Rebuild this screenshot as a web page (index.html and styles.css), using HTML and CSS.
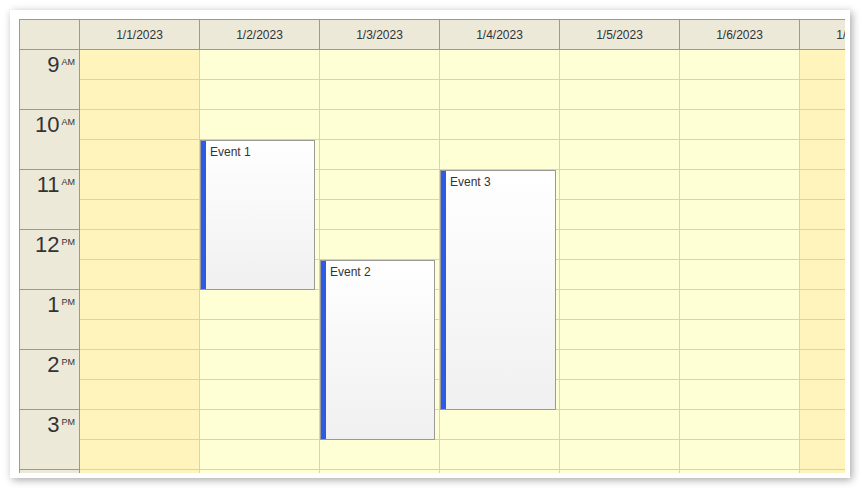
FILE: index.html
```html
<!DOCTYPE html>
<html>
<head>
    <title>Calendar</title>
    <link rel="stylesheet" href="styles.css">
</head>
<body>
    <div class="frame">
        <div class="calendar">
            <div class="grid">
                <!-- header -->
                <div class="corner"></div>
                <div class="col-header">1/1/2023</div>
                <div class="col-header">1/2/2023</div>
                <div class="col-header">1/3/2023</div>
                <div class="col-header">1/4/2023</div>
                <div class="col-header">1/5/2023</div>
                <div class="col-header">1/6/2023</div>
                <div class="col-header">1/7/2023</div>

                <!-- hour headers -->
                <div class="hours">
                    <div class="hour"><span class="num">9</span><span class="ampm">AM</span></div>
                    <div class="hour"><span class="num">10</span><span class="ampm">AM</span></div>
                    <div class="hour"><span class="num">11</span><span class="ampm">AM</span></div>
                    <div class="hour"><span class="num">12</span><span class="ampm">PM</span></div>
                    <div class="hour"><span class="num">1</span><span class="ampm">PM</span></div>
                    <div class="hour"><span class="num">2</span><span class="ampm">PM</span></div>
                    <div class="hour"><span class="num">3</span><span class="ampm">PM</span></div>
                    <!-- 4 PM row, only its top edge shows -->
                    <div class="hour"></div>
                </div>

                <!-- day columns, filled by script -->
                <div class="day weekend"></div>
                <div class="day" id="day2"></div>
                <div class="day" id="day3"></div>
                <div class="day" id="day4"></div>
                <div class="day"></div>
                <div class="day"></div>
                <div class="day weekend"></div>
            </div>
        </div>
    </div>

    <script>
        // half-hour cells for every day column
        document.querySelectorAll('.day').forEach(function(day) {
            for (let i = 0; i < 16; i++) {
                const cell = document.createElement('div');
                cell.className = 'cell';
                day.appendChild(cell);
            }
        });

        // events: start/end in minutes from 9:00
        const events = [
            { day: 'day2', text: 'Event 1', start: 90, end: 240, width: 115 },
            { day: 'day3', text: 'Event 2', start: 210, end: 390, width: 115 },
            { day: 'day4', text: 'Event 3', start: 120, end: 360, width: 116 }
        ];

        events.forEach(function(ev) {
            const div = document.createElement('div');
            div.className = 'event';
            div.style.top = ev.start + 'px';
            div.style.height = (ev.end - ev.start) + 'px';
            div.style.width = ev.width + 'px';
            div.innerHTML = '<div class="event-bar"></div><div class="event-text">' + ev.text + '</div>';
            document.getElementById(ev.day).appendChild(div);
        });
    </script>
</body>
</html>
```

FILE: styles.css
```css
body {
    margin: 0;
    background: #fff;
    font-family: "Liberation Sans", Arial, sans-serif;
}
.frame {
    margin: 10px;
    width: 840px;
    height: 468px;
    box-sizing: border-box;
    padding: 9px 5px 5px 9px;
    background: #fff;
    box-shadow: 2px 2px 8px rgba(0,0,0,0.35);
}
.calendar {
    width: 826px;
    height: 454px;
    overflow: hidden;
}
.grid {
    display: grid;
    grid-template-columns: 60px repeat(7, 120px);
    grid-template-rows: 30px auto;
    width: max-content;
    border-top: 1px solid #999;
    border-left: 1px solid #999;
}
.corner,
.col-header {
    background: #ece9d8;
    border-right: 1px solid #999;
    border-bottom: 1px solid #999;
    box-sizing: border-box;
}
.col-header {
    font-size: 12px;
    color: #333;
    text-align: center;
    padding-top: 2px;
    line-height: 27px;
    white-space: nowrap;
    overflow: hidden;
}
.hours {
    display: flex;
    flex-direction: column;
}
.hour {
    height: 60px;
    box-sizing: border-box;
    display: flex;
    justify-content: flex-end;
    align-items: flex-start;
    padding: 2px 4px 0 0;
    background: #ece9d8;
    border-right: 1px solid #999;
    border-bottom: 1px solid #999;
    color: #333;
}
.num {
    font-size: 22px;
    line-height: 25px;
}
.ampm {
    font-size: 9px;
    line-height: 11px;
    margin: 5px 0 0 2px;
}
.day {
    position: relative;
    background: #ffffd5;
}
.day.weekend {
    background: #fff4bc;
}
.cell {
    height: 30px;
    box-sizing: border-box;
    border-right: 1px solid #ead098;
    border-bottom: 1px solid #ead098;
}
.event {
    position: absolute;
    left: 0;
    box-sizing: border-box;
    display: flex;
    border: 1px solid #999;
    background: linear-gradient(#ffffff, #f0f0f0);
    overflow: hidden;
}
.event-bar {
    width: 5px;
    background: #2d5be3;
    flex: none;
}
.event-text {
    padding: 4px 4px;
    font-size: 12px;
    line-height: 15px;
    color: #333;
}
```
